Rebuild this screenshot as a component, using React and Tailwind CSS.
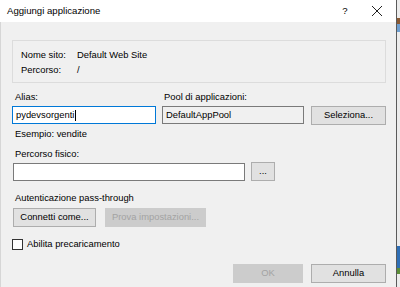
import React from 'react';

// Windows-style "Aggiungi applicazione" dialog (IIS)
const FONT = { fontFamily: '"Liberation Sans", Arial, sans-serif' };

const Button = ({ children, w, disabled = false }) => (
  <div
    className={`h-[19px] flex items-center justify-center border ${
      disabled ? 'bg-[#cccccc] border-[#cccccc] text-[#a3a3a3]' : 'bg-[#e1e1e1] border-[#adadad] text-black'
    } ${w}`}
  >
    {children}
  </div>
);

const App = () => {
  return (
    <div className="w-[400px] h-[287px] flex overflow-hidden bg-white text-[9.4px] text-black" style={FONT}>
      <div className="w-[397px] h-full flex flex-col border-r border-[#5a5a5a]">
        {/* Title bar */}
        <div className="h-[22px] shrink-0 bg-white flex items-center pl-[7px] text-[9.6px]">
          <span className="flex-1">Aggiungi applicazione</span>
          <span className="w-[8px] text-center mr-[22px]">?</span>
          <svg width="12" height="12" viewBox="0 0 12 12" className="mr-[13px]">
            <path d="M1 1 L11 11 M11 1 L1 11" stroke="#222" strokeWidth="1" fill="none" />
          </svg>
        </div>

        {/* Body */}
        <div className="flex-1 bg-[#f0f0f0] border-l border-[#d6d6d6] pl-[11px] pr-[10px] flex flex-col">
          <div className="mt-[18px] h-[43px] border border-[#dcdcdc] px-[8px] py-[6px] flex flex-col leading-[15px]">
            <div className="flex">
              <span className="w-[56px]">Nome sito:</span>
              <span>Default Web Site</span>
            </div>
            <div className="flex">
              <span className="w-[56px]">Percorso:</span>
              <span>/</span>
            </div>
          </div>

          {/* Alias / Pool */}
          <div className="mt-[7px] flex leading-[14px]">
            <span className="w-[150px] pl-[3px]">Alias:</span>
            <span className="pl-[2px]">Pool di applicazioni:</span>
          </div>
          <div className="mt-[2px] flex items-start">
            <div className="w-[144px] h-[18px] border border-[#0078d7] bg-white flex items-center pl-[3px]">
              <span>pydevsorgenti</span>
              <span className="w-[1px] h-[11px] bg-black ml-[1px]" />
            </div>
            <div className="ml-[6px] w-[142px] h-[18px] border border-[#7a7a7a] bg-[#f0f0f0] flex items-center pl-[3px]">
              DefaultAppPool
            </div>
            <div className="ml-[7px]">
              <Button w="w-[75px]">Seleziona...</Button>
            </div>
          </div>
          <div className="mt-[2px] pl-[3px] leading-[14px]">Esempio: vendite</div>

          {/* Percorso fisico */}
          <div className="mt-[6px] pl-[3px] leading-[14px]">Percorso fisico:</div>
          <div className="mt-[1px] flex items-start">
            <div className="ml-[1px] w-[232px] h-[18px] border border-[#7a7a7a] bg-white mt-[1px]" />
            <div className="ml-[6px]">
              <Button w="w-[24px]">...</Button>
            </div>
          </div>

          {/* Autenticazione */}
          <div className="mt-[10px] pl-[3px] leading-[14px]">Autenticazione pass-through</div>
          <div className="mt-[3px] ml-[1px] flex gap-[9px]">
            <Button w="w-[83px]">Connetti come...</Button>
            <Button w="w-[101px]" disabled>
              Prova impostazioni...
            </Button>
          </div>

          {/* Checkbox */}
          <div className="mt-[10px] flex items-center leading-[14px]">
            <div className="w-[11px] h-[11px] border border-[#333333] bg-white" />
            <span className="ml-[4px]">Abilita precaricamento</span>
          </div>

          {/* Footer buttons */}
          <div className="mt-[13px] flex justify-end gap-[8px]">
            <Button w="w-[70px]" disabled>
              OK
            </Button>
            <Button w="w-[75px]">Annulla</Button>
          </div>
        </div>
      </div>

      {/* Desktop strip behind the dialog */}
      <div className="w-[3px] h-full flex flex-col bg-[#ececec]">
        <div className="h-[18px]" />
        <div className="h-[6px] bg-[#8a5a34]" />
        <div className="h-[8px] bg-[#6f9fd0]" />
        <div className="h-[214px]" />
        <div className="h-[22px] bg-[#2f6fb5]" />
        <div className="h-[6px] bg-[#5d8f3a]" />
      </div>
    </div>
  );
};

export default App;
